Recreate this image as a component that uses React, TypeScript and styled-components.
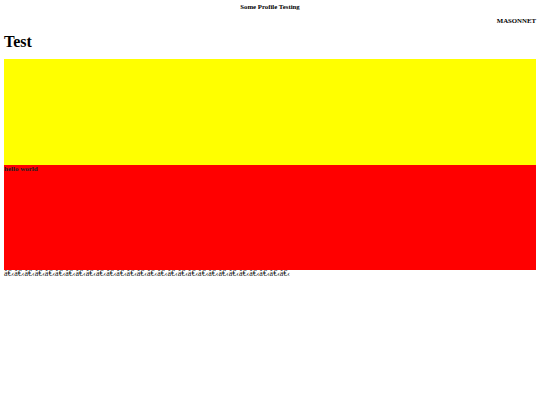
import React from "react";
import styled, { createGlobalStyle } from "styled-components";

const Global = createGlobalStyle`
  html, body { margin: 0; padding: 0; background: #fff; }
  body { font-family: "Liberation Serif", "Times New Roman", serif; color: #000; }
`;

const Page = styled.div`
  padding: 0 4px;
  display: flex;
  flex-direction: column;
`;

const Title = styled.h5`
  margin: 3px 0 0;
  font-size: 6.8px;
  line-height: 8px;
  font-weight: bold;
  text-align: center;
`;

const Brand = styled.h5`
  margin: 6px 0 0;
  font-size: 6.8px;
  line-height: 8px;
  font-weight: bold;
  text-align: right;
`;

const Heading = styled.h1`
  margin: 8px 0 8px;
  font-size: 16px;
  line-height: 18px;
  font-weight: bold;
`;

const Block = styled.div<{ $bg: string }>`
  height: 105.5px;
  background: ${(p) => p.$bg};
`;

const BlockText = styled.div`
  font-size: 7px;
  line-height: 8px;
  font-weight: bold;
  color: #222;
`;

const Garbled = styled.div`
  font-size: 8px;
  line-height: 8px;
  white-space: nowrap;
  color: #111;
`;

export default function App() {
  return (
    <>
      <Global />
      <Page>
        <Title>Some Profile Testing</Title>
        <Brand>MASONNET</Brand>
        <Heading>Test</Heading>
        <Block $bg="#ffff00" />
        <Block $bg="#ff0000">
          <BlockText>hello world</BlockText>
        </Block>
        <Garbled>{"â€‹".repeat(28)}</Garbled>
      </Page>
    </>
  );
}
